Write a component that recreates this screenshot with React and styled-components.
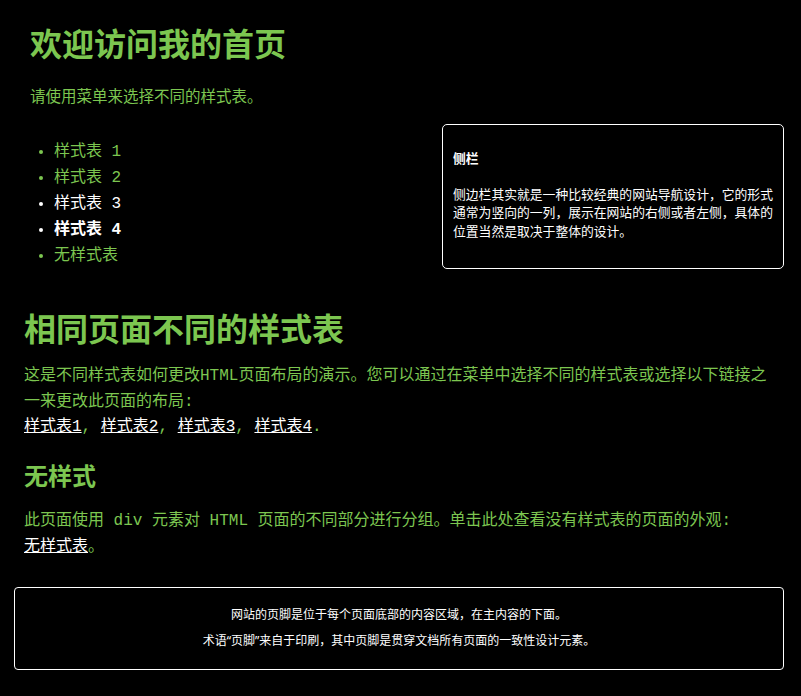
import React from "react";
import styled, { createGlobalStyle } from "styled-components";

const GREEN = "#7cc650";
const MONO = `"Liberation Mono", "Noto Sans CJK SC", monospace`;
const SANS = `"Noto Sans CJK SC", "Noto Sans", sans-serif`;
const FOOT = `"Noto Sans", "Noto Sans CJK SC", sans-serif`;

const GlobalStyle = createGlobalStyle`
  html, body { margin: 0; padding: 0; background: #000; }
  body { font-family: ${MONO}; color: ${GREEN}; }
`;

const Page = styled.div`
  padding: 0 17px 10px 14px;
`;

const Header = styled.header`
  padding: 23px 0 0 16px;
`;

const Title = styled.h1`
  margin: 0;
  font-family: ${SANS};
  font-weight: 700;
  font-size: 32px;
  line-height: 38.4px;
  color: ${GREEN};
`;

const Intro = styled.p`
  margin: 22px 0 0;
  font-family: ${SANS};
  font-size: 15.5px;
  line-height: 24px;
`;

const Row = styled.div`
  display: flex;
  justify-content: space-between;
  align-items: flex-start;
  margin-top: 16.6px;
`;

const Menu = styled.ul`
  margin: 15px 0 0;
  padding-left: 40px;
  list-style: disc;
  font-family: ${MONO};
  font-size: 16px;
  line-height: 26px;
`;

const MenuItem = styled.li`
  color: ${(p) => (p.$active ? "#fff" : GREEN)};
  font-weight: ${(p) => (p.$bold ? 700 : 400)};
`;

const Sidebar = styled.aside`
  width: 342px;
  box-sizing: border-box;
  border: 1px solid #fff;
  border-radius: 5px;
  padding: 24px 9px 27.75px 10px;
  font-family: ${SANS};
  color: #fff;
`;

const SideTitle = styled.h3`
  margin: 0;
  font-size: 12.8px;
  line-height: 18.5px;
  font-weight: 700;
`;

const SideText = styled.p`
  margin: 17.25px 0 0;
  font-size: 12.8px;
  line-height: 18.5px;
`;

const Section = styled.section`
  padding: 0 10px;
  margin-top: 39px;
`;

const SubTitle = styled.h2`
  margin: 19.6px 0 0;
  font-family: ${SANS};
  font-weight: 700;
  font-size: 24px;
  line-height: 28.8px;
`;

const Text = styled.p`
  margin: ${(p) => p.$top || "0"} 0 0;
  font-family: ${MONO};
  font-size: 16px;
  line-height: 25.6px;
`;

const Link = styled.a`
  color: #fff;
  text-decoration: underline;
`;

const Footer = styled.footer`
  margin-top: 26.2px;
  border: 1px solid #fff;
  border-radius: 4px;
  padding: 18px 0 19px;
  text-align: center;
  font-family: ${FOOT};
  color: #fff;
`;

const FootText = styled.p`
  margin: ${(p) => (p.$first ? "0" : "8px")} 0 0;
  font-size: 12px;
  line-height: 18px;
`;

const items = [
  { label: "样式表 1" },
  { label: "样式表 2" },
  { label: "样式表 3", active: true },
  { label: "样式表 4", active: true, bold: true },
  { label: "无样式表" },
];

export default function App() {
  return (
    <>
      <GlobalStyle />
      <Page>
        <Header>
          <Title>欢迎访问我的首页</Title>
          <Intro>请使用菜单来选择不同的样式表。</Intro>
        </Header>
        <Row>
          <Menu>
            {items.map((it) => (
              <MenuItem key={it.label} $active={it.active} $bold={it.bold}>
                {it.label}
              </MenuItem>
            ))}
          </Menu>
          <Sidebar>
            <SideTitle>侧栏</SideTitle>
            <SideText>
              侧边栏其实就是一种比较经典的网站导航设计，它的形式通常为竖向的一列，展示在网站的右侧或者左侧，具体的位置当然是取决于整体的设计。
            </SideText>
          </Sidebar>
        </Row>
        <Section>
          <Title>相同页面不同的样式表</Title>
          <Text $top="17.8px">
            这是不同样式表如何更改HTML页面布局的演示。您可以通过在菜单中选择不同的样式表或选择以下链接之一来更改此页面的布局:
            <br />
            <Link href="#">样式表1</Link>, <Link href="#">样式表2</Link>,{" "}
            <Link href="#">样式表3</Link>, <Link href="#">样式表4</Link>.
          </Text>
          <SubTitle>无样式</SubTitle>
          <Text $top="19.8px">
            此页面使用 div 元素对 HTML 页面的不同部分进行分组。单击此处查看没有样式表的页面的外观:
            <br />
            <Link href="#">无样式表</Link>。
          </Text>
        </Section>
        <Footer>
          <FootText $first>网站的页脚是位于每个页面底部的内容区域，在主内容的下面。</FootText>
          <FootText>术语“页脚”来自于印刷，其中页脚是贯穿文档所有页面的一致性设计元素。</FootText>
        </Footer>
      </Page>
    </>
  );
}
